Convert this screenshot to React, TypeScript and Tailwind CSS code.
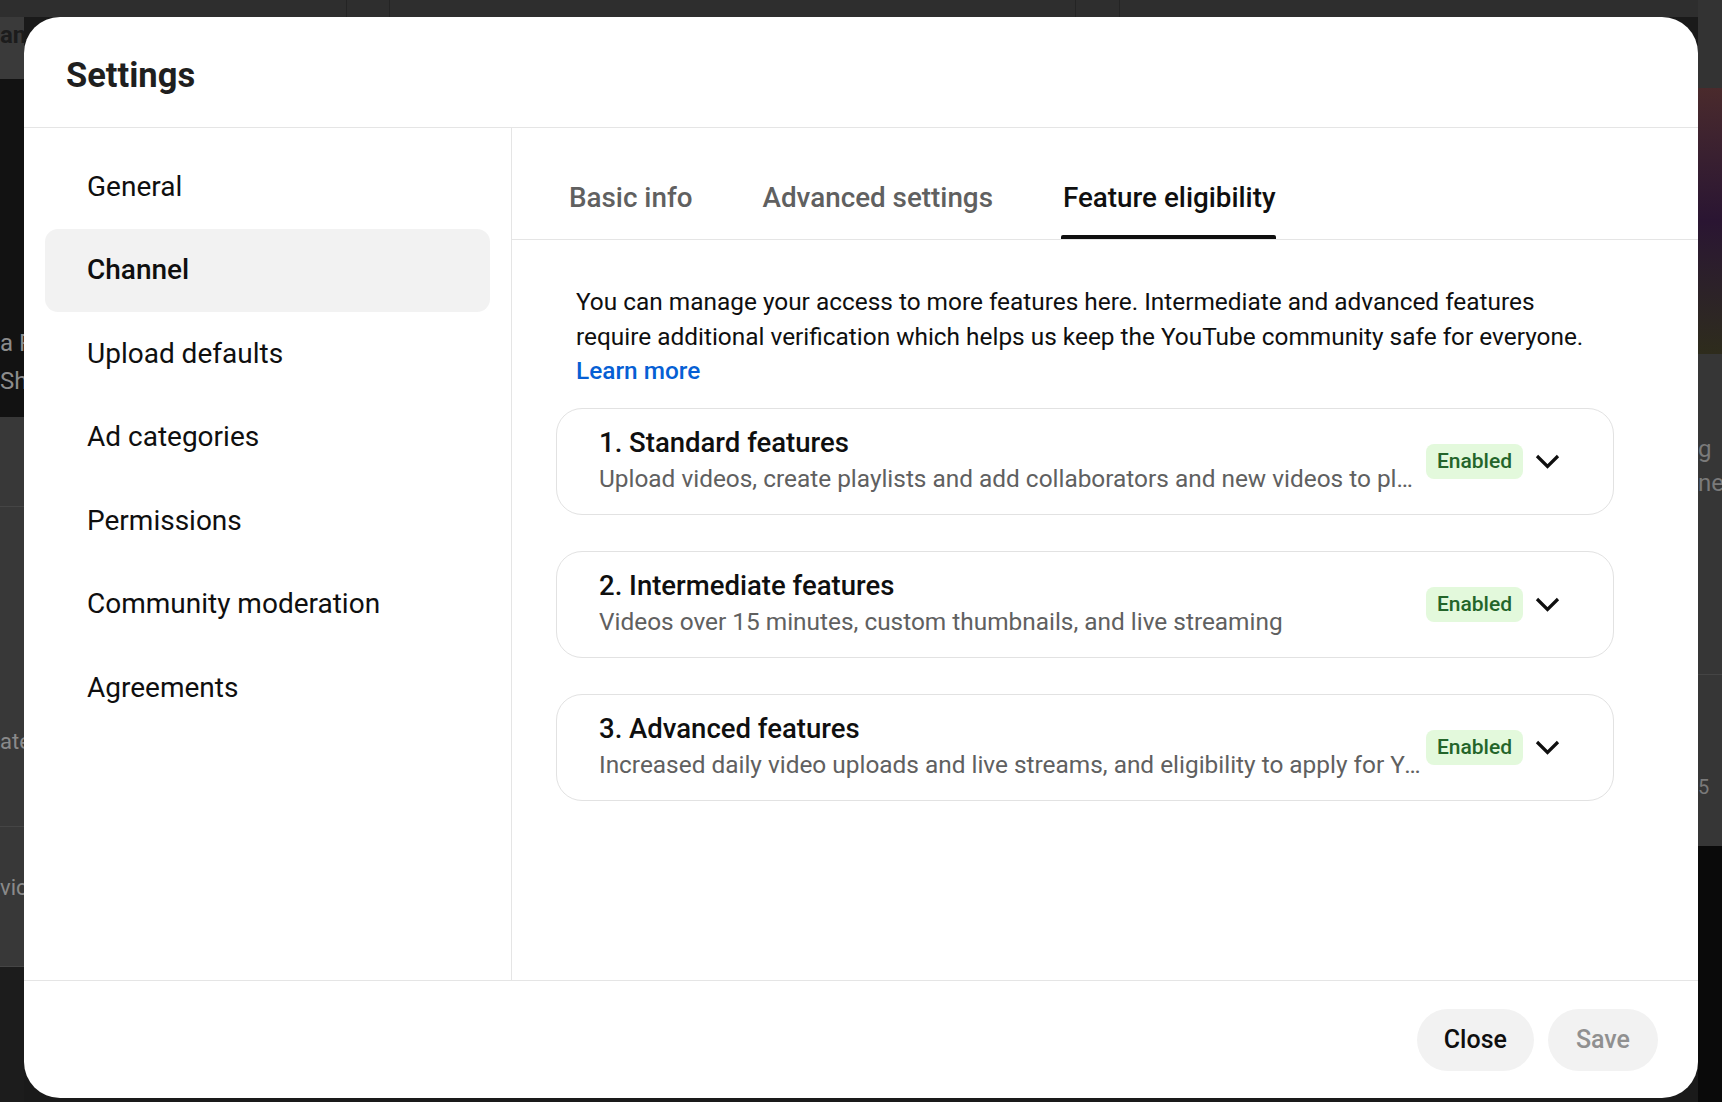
import React from "react"

const navItems = [
  "General",
  "Channel",
  "Upload defaults",
  "Ad categories",
  "Permissions",
  "Community moderation",
  "Agreements",
]

const tabs = ["Basic info", "Advanced settings", "Feature eligibility"]

const features = [
  {
    title: "1. Standard features",
    desc: "Upload videos, create playlists and add collaborators and new videos to playlists",
  },
  {
    title: "2. Intermediate features",
    desc: "Videos over 15 minutes, custom thumbnails, and live streaming",
  },
  {
    title: "3. Advanced features",
    desc: "Increased daily video uploads and live streams, and eligibility to apply for YouTube Partner Program",
  },
]

function Chevron() {
  return (
    <svg width="25" height="15" viewBox="0 0 25 15" className="shrink-0">
      <polyline points="2,2 12.5,12.5 23,2" fill="none" stroke="#0f0f0f" strokeWidth="3.2" />
    </svg>
  )
}

function Backdrop() {
  return (
    <div className="flex h-full w-full">
      {/* left edge of the page behind */}
      <div className="flex w-[24px] flex-col overflow-hidden whitespace-nowrap">
        <div className="h-[17px] bg-[#2e2e2e]" />
        <div className="h-[62px] bg-[#3a3a3a] text-[24px] font-bold leading-[24px] text-[#1c1c1c]">
          <span className="block pt-[6px]">an</span>
        </div>
        <div className="flex h-[338px] flex-col justify-end bg-[#121212] pb-[17px] text-[24px] leading-[38px] text-[#8c8c8c]">
          <span>a R</span>
          <span>Sh</span>
        </div>
        <div className="h-[90px] border-b border-[#454545] bg-[#383838]" />
        <div className="flex h-[320px] flex-col justify-center border-b border-[#454545] bg-[#383838] text-[22px] text-[#8a8a8a]">
          <span className="pt-[150px]">ate</span>
        </div>
        <div className="flex h-[140px] items-center border-b border-[#454545] bg-[#383838] pb-[18px] text-[22px] text-[#8a8a8a]">
          vic
        </div>
        <div className="flex-1 bg-[#1c1c1c]" />
      </div>

      {/* middle of the page behind */}
      <div className="flex flex-1 flex-col">
        <div className="flex h-[17px] bg-[#2e2e2e]">
          <div className="w-[323px] border-r border-[#242424]" />
          <div className="w-[43px] border-r border-[#242424]" />
          <div className="w-[686px] border-r border-[#242424]" />
          <div className="w-[44px] border-r border-[#242424]" />
        </div>
        <div className="flex-1 bg-[#1a1a1a]" />
      </div>

      {/* right edge of the page behind */}
      <div className="flex w-[24px] flex-col overflow-hidden whitespace-nowrap">
        <div className="h-[88px] bg-[#333333]" />
        <div className="h-[266px] bg-gradient-to-b from-[#4a2a2c] via-[#2a1532] to-[#2e2c1c]" />
        <div className="flex h-[320px] flex-col bg-[#363636] pt-[78px] text-[24px] leading-[34px] text-[#7a7a7a]">
          <span>g</span>
          <span>ne</span>
        </div>
        <div className="flex h-[172px] items-center border-t border-[#444444] bg-[#363636] pt-[52px] text-[20px] text-[#7a7a7a]">
          5
        </div>
        <div className="flex-1 bg-[#0a0a0a]" />
      </div>
    </div>
  )
}

export default function App() {
  return (
    <div className="relative h-[1102px] w-[1722px] overflow-hidden bg-[#1a1a1a] font-['Roboto','Liberation_Sans',sans-serif] text-[#0f0f0f]">
      <Backdrop />

      {/* settings dialog */}
      <div className="absolute left-[24px] top-[17px] flex h-[1081px] w-[1674px] flex-col overflow-hidden rounded-[36px] bg-white">
        <div className="flex h-[111px] shrink-0 items-center border-b border-[#e5e5e5] pl-[42px] pt-[6px]">
          <h1 className="text-[34.5px] font-bold leading-[41px] text-[#1f1f1f]">Settings</h1>
        </div>

        <div className="flex min-h-0 flex-1">
          <nav className="w-[488px] shrink-0 border-r border-[#e5e5e5] px-[21px] pt-[17px]">
            {navItems.map((item) => (
              <div
                key={item}
                className={
                  item === "Channel"
                    ? "flex h-[83.5px] items-center rounded-[13px] bg-[#f2f2f2] px-[42px] text-[28px] font-medium"
                    : "flex h-[83.5px] items-center rounded-[13px] px-[42px] text-[28px]"
                }
              >
                {item}
              </div>
            ))}
          </nav>

          <div className="flex min-w-0 flex-1 flex-col">
            <div className="flex h-[112px] shrink-0 items-end gap-[70px] border-b border-[#e5e5e5] pl-[57px]">
              {tabs.map((tab) => {
                const active = tab === "Feature eligibility"
                return (
                  <div key={tab} className="flex flex-col">
                    <span
                      className={
                        active
                          ? "text-[27.8px] font-medium leading-[36px] text-[#0f0f0f]"
                          : "text-[27.8px] font-medium leading-[36px] text-[#606060]"
                      }
                    >
                      {tab}
                    </span>
                    <div
                      className={
                        active
                          ? "mt-[19.5px] ml-[-2px] h-[4px] rounded-t-[2px] bg-[#0f0f0f]"
                          : "mt-[19.5px] h-[4px]"
                      }
                    />
                  </div>
                )
              })}
            </div>

            <div className="pl-[44px] pr-[84px] pt-[45px]">
              <p className="mb-[19.5px] px-[20px] text-[24.4px] leading-[34.5px] text-[#0f0f0f]">
                You can manage your access to more features here. Intermediate and advanced features
                require additional verification which helps us keep the YouTube community safe for everyone.
                <br />
                <span className="font-medium text-[#065fd4]">Learn more</span>
              </p>

              <div className="flex flex-col gap-[36px]">
                {features.map((f) => (
                  <div
                    key={f.title}
                    className="flex h-[107px] items-center rounded-[26px] border border-[#e2e2e2] pl-[42px] pr-[53px]"
                  >
                    <div className="min-w-0 flex-1 pb-[2px]">
                      <div className="mb-[2px] truncate text-[27.5px] font-medium leading-[34px]">{f.title}</div>
                      <div className="truncate text-[24.4px] leading-[34px] text-[#606060]">{f.desc}</div>
                    </div>
                    <span className="ml-[2px] flex h-[35px] shrink-0 items-center rounded-[8px] bg-[#e3f9dc] px-[11px] text-[21px] font-medium text-[#24652a]">
                      Enabled
                    </span>
                    <span className="ml-[12px] flex">
                      <Chevron />
                    </span>
                  </div>
                ))}
              </div>
            </div>
          </div>
        </div>

        <div className="flex h-[118px] shrink-0 items-center justify-end gap-[14px] border-t border-[#e5e5e5] pr-[40px]">
          <button className="h-[62px] rounded-full bg-[#f2f2f2] px-[27px] text-[25px] font-medium text-[#0f0f0f]">
            Close
          </button>
          <button className="h-[62px] rounded-full bg-[#f2f2f2] px-[28px] text-[25px] font-medium text-[#909090]">
            Save
          </button>
        </div>
      </div>
    </div>
  )
}
